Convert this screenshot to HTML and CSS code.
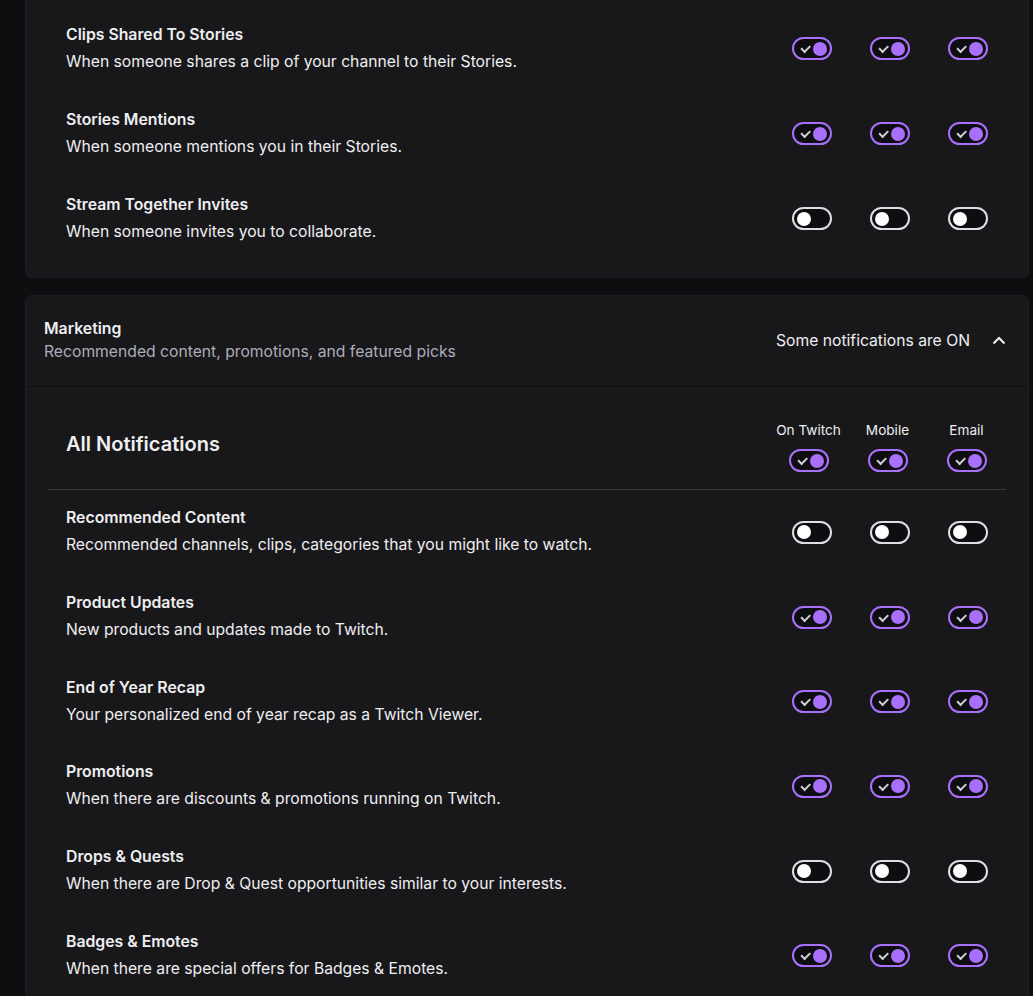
FILE: index.html
```html
<!DOCTYPE html>
<html>
<head>
<meta charset="utf-8">
<link rel="stylesheet" href="styles.css">
</head>
<body>
<div class="page">
  <section class="card card-top">
    <div class="row">
      <div class="row-text"><div class="row-title">Clips Shared To Stories</div><div class="row-desc">When someone shares a clip of your channel to their Stories.</div></div>
      <div class="toggles"><span class="tg on"></span><span class="tg on"></span><span class="tg on"></span></div>
    </div>
    <div class="row">
      <div class="row-text"><div class="row-title">Stories Mentions</div><div class="row-desc">When someone mentions you in their Stories.</div></div>
      <div class="toggles"><span class="tg on"></span><span class="tg on"></span><span class="tg on"></span></div>
    </div>
    <div class="row">
      <div class="row-text"><div class="row-title">Stream Together Invites</div><div class="row-desc">When someone invites you to collaborate.</div></div>
      <div class="toggles"><span class="tg"></span><span class="tg"></span><span class="tg"></span></div>
    </div>
  </section>

  <section class="card card-main">
    <header class="card-head">
      <div>
        <div class="head-title">Marketing</div>
        <div class="head-sub">Recommended content, promotions, and featured picks</div>
      </div>
      <div class="head-right">
        <span>Some notifications are ON</span>
        <svg class="chev" width="14" height="9" viewBox="0 0 14 9"><path d="M1.5 7.5 L7 2 L12.5 7.5" fill="none" stroke="#efeff1" stroke-width="2"/></svg>
      </div>
    </header>
    <div class="card-body">
      <div class="all-row">
        <h2 class="all-title">All Notifications</h2>
        <div class="cols">
          <div class="col"><div class="col-label">On Twitch</div><span class="tg on"></span></div>
          <div class="col"><div class="col-label">Mobile</div><span class="tg on"></span></div>
          <div class="col"><div class="col-label">Email</div><span class="tg on"></span></div>
        </div>
      </div>
      <div class="row">
        <div class="row-text"><div class="row-title">Recommended Content</div><div class="row-desc">Recommended channels, clips, categories that you might like to watch.</div></div>
        <div class="toggles"><span class="tg"></span><span class="tg"></span><span class="tg"></span></div>
      </div>
      <div class="row">
        <div class="row-text"><div class="row-title">Product Updates</div><div class="row-desc">New products and updates made to Twitch.</div></div>
        <div class="toggles"><span class="tg on"></span><span class="tg on"></span><span class="tg on"></span></div>
      </div>
      <div class="row">
        <div class="row-text"><div class="row-title">End of Year Recap</div><div class="row-desc">Your personalized end of year recap as a Twitch Viewer.</div></div>
        <div class="toggles"><span class="tg on"></span><span class="tg on"></span><span class="tg on"></span></div>
      </div>
      <div class="row">
        <div class="row-text"><div class="row-title">Promotions</div><div class="row-desc">When there are discounts &amp; promotions running on Twitch.</div></div>
        <div class="toggles"><span class="tg on"></span><span class="tg on"></span><span class="tg on"></span></div>
      </div>
      <div class="row">
        <div class="row-text"><div class="row-title">Drops &amp; Quests</div><div class="row-desc">When there are Drop &amp; Quest opportunities similar to your interests.</div></div>
        <div class="toggles"><span class="tg"></span><span class="tg"></span><span class="tg"></span></div>
      </div>
      <div class="row">
        <div class="row-text"><div class="row-title">Badges &amp; Emotes</div><div class="row-desc">When there are special offers for Badges &amp; Emotes.</div></div>
        <div class="toggles"><span class="tg on"></span><span class="tg on"></span><span class="tg on"></span></div>
      </div>
    </div>
  </section>
</div>
</body>
</html>
```

FILE: styles.css
```css
* { box-sizing: border-box; }
html, body { margin: 0; padding: 0; }
body {
  background: #0e0e10;
  font-family: Inter, "Noto Sans", sans-serif;
  color: #efeff1;
  height: 996px;
  overflow: hidden;
}
.page {
  padding: 0 5px 0 26px;
  display: flex;
  flex-direction: column;
  gap: 19px;
}
.card {
  background: #18181b;
  border-radius: 6px;
  box-shadow: 0 0 0 1px #1f1f23;
}
.card-top {
  border-radius: 0 0 6px 6px;
  padding: 6px 22px 16px;
}
.row {
  display: flex;
  align-items: center;
  justify-content: space-between;
  height: 85px;
  padding: 0 18px;
}
.card-body .row {
  height: 84.7px;
}
.row-title {
  font-size: 15.8px;
  font-weight: 600;
  line-height: 20px;
}
.row-desc {
  font-size: 15.7px;
  line-height: 22px;
  margin-top: 6px;
}
.toggles {
  display: flex;
  gap: 38px;
}
.tg {
  display: block;
  position: relative;
  width: 40px;
  height: 23px;
  border: 2px solid #dedee3;
  border-radius: 12px;
  background: #0e0e10;
}
.tg::after {
  content: "";
  position: absolute;
  left: 3px;
  top: 2.5px;
  width: 14px;
  height: 14px;
  border-radius: 50%;
  background: #ffffff;
}
.tg.on {
  border-color: #a970ff;
}
.tg.on::after {
  left: auto;
  right: 3px;
  background: #a970ff;
}
.tg.on::before {
  content: "";
  position: absolute;
  left: 7px;
  top: 6px;
  width: 7px;
  height: 3.5px;
  border-left: 2px solid #cfcfd6;
  border-bottom: 2px solid #cfcfd6;
  transform: rotate(-45deg);
}
.card-head {
  display: flex;
  align-items: center;
  justify-content: space-between;
  height: 91px;
  padding: 0 22px 0 18px;
  border-bottom: 1px solid #0e0e10;
}
.head-title {
  font-size: 15.8px;
  font-weight: 600;
  line-height: 20px;
}
.head-sub {
  font-size: 15.7px;
  line-height: 22px;
  margin-top: 2px;
  color: #adadb8;
}
.head-right {
  display: flex;
  align-items: center;
  gap: 22px;
  font-size: 15.7px;
  margin-top: -1px;
}
.chev { display: block; }
.card-body {
  padding: 0 22px;
}
.all-row {
  display: flex;
  justify-content: space-between;
  align-items: flex-start;
  padding: 34px 0 17px 18px;
  border-bottom: 1px solid #3a3a3d;
}
.all-title {
  margin: 10px 0 0;
  font-size: 20px;
  font-weight: 600;
  line-height: 26px;
}
.cols {
  display: flex;
}
.col {
  width: 79px;
  display: flex;
  flex-direction: column;
  align-items: center;
  gap: 10px;
}
.col-label {
  font-size: 13.6px;
  line-height: 18px;
}
```
